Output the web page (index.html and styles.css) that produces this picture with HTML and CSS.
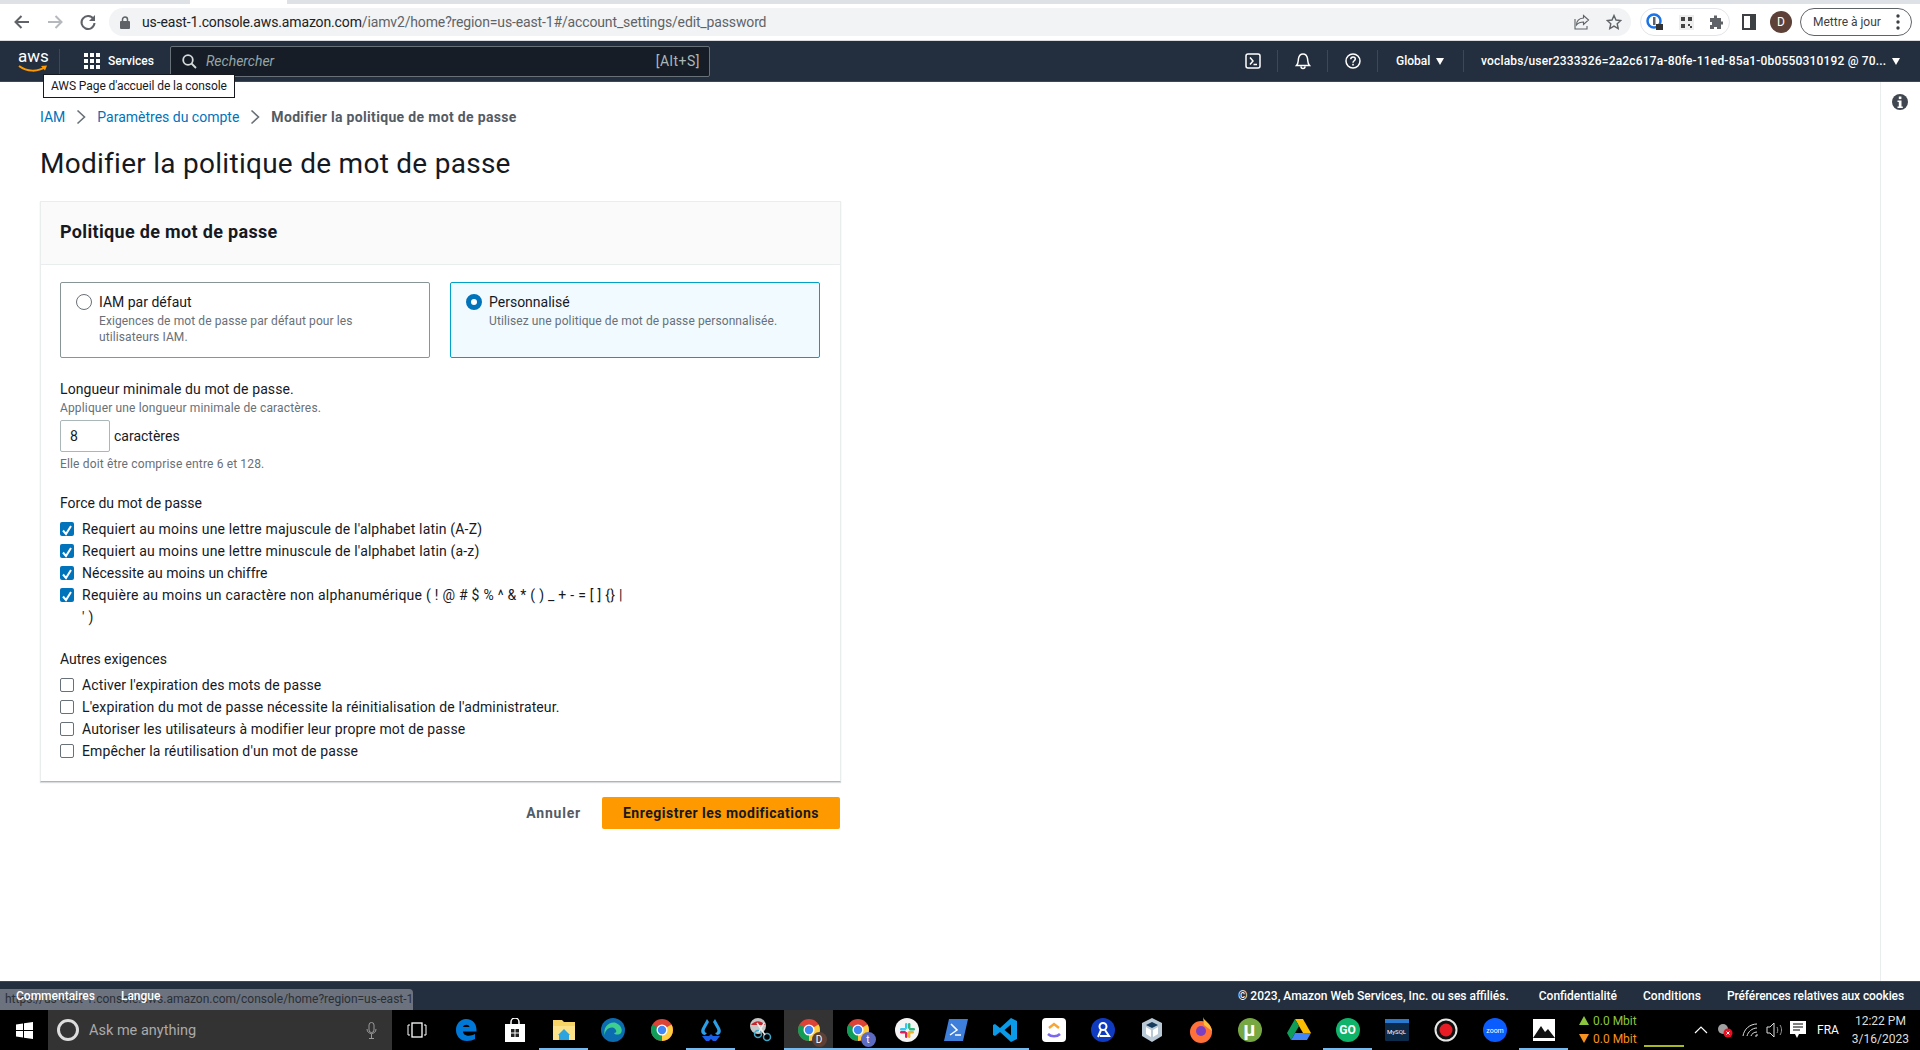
FILE: index.html
```html
<!DOCTYPE html>
<html>

<head>
    <title>Modifier la politique de mot de passe</title>
    <link rel="stylesheet" href="styles.css">
</head>

<body>
    <svg class="defs" width="0" height="0">
        <symbol id="chrome" viewBox="0 0 24 24">
            <circle cx="12" cy="12" r="11" fill="#db4437"/>
            <path d="M12 12 2.5 6.5A11 11 0 0 0 12 23z" fill="#0f9d58"/>
            <path d="M12 12v11a11 11 0 0 0 9.5-16.5z" fill="#ffcd40"/>
            <circle cx="12" cy="12" r="5.5" fill="#fff"/>
            <circle cx="12" cy="12" r="4.2" fill="#4285f4"/>
        </symbol>
        <symbol id="tick" viewBox="0 0 14 16">
            <path d="M3 8.5 6 12l5-8" fill="none" stroke="#fff" stroke-width="2"/>
        </symbol>
    </svg>

    <!-- browser chrome -->
    <div class="tabstrip">
        <div class="tab-active"></div>
    </div>
    <div class="toolbar">
        <div class="nav-buttons">
            <svg width="18" height="18" viewBox="0 0 18 18"><path d="M16 9H3M8.5 3 2.5 9l6 6" fill="none" stroke="#5f6368" stroke-width="2"/></svg>
            <svg width="18" height="18" viewBox="0 0 18 18"><path d="M2 9h13M9.5 3l6 6-6 6" fill="none" stroke="#b5b8bc" stroke-width="2"/></svg>
            <svg width="18" height="18" viewBox="0 0 18 18"><path d="M14.5 6A6.5 6.5 0 1 0 15.5 10" fill="none" stroke="#5f6368" stroke-width="2"/><path d="M16 2v6h-6z" fill="#5f6368"/></svg>
        </div>
        <div class="omnibox">
            <svg width="10" height="13" viewBox="0 0 10 13"><path d="M2.5 5V3.5a2.5 2.5 0 0 1 5 0V5" fill="none" stroke="#5f6368" stroke-width="1.5"/><rect y="5" width="10" height="8" rx="1" fill="#5f6368"/></svg>
            <span class="url"><span class="url-host">us-east-1.console.aws.amazon.com</span>/iamv2/home?region=us-east-1#/account_settings/edit_password</span>
            <svg class="omni-share" width="16" height="16" viewBox="0 0 16 16"><path d="M14.5 6 9.5 1.5V4C4 4.5 2.5 8 2.5 11 4.5 8.5 7 8 9.5 8v2.5zM1 5v10h12v-3" fill="none" stroke="#5f6368" stroke-width="1.1"/></svg>
            <svg width="16" height="16" viewBox="0 0 16 16"><path d="m8 1.5 2 4.5 4.8.5-3.6 3.2 1 4.8L8 12.1 3.8 14.5l1-4.8L1.2 6.5 6 6z" fill="none" stroke="#5f6368" stroke-width="1.4"/></svg>
        </div>
        <div class="ext-pill">
            <svg width="18" height="20" viewBox="0 0 18 20"><circle cx="8" cy="9" r="6.5" fill="none" stroke="#1a73e8" stroke-width="2.5"/><rect x="7" y="5" width="2.5" height="8" fill="#5f6368"/><rect x="10" y="12" width="7" height="6" fill="#333"/></svg>
            <svg width="15" height="15" viewBox="0 0 15 15"><rect width="15" height="15" fill="#eee"/><path d="M2 2h4v4H2zM9 2h4v4H9zM2 9h4v4H2zM9 9h2v2H9zM11 11h2v2h-2z" fill="#444"/></svg>
            <svg width="16" height="16" viewBox="0 0 16 16"><path d="M6 1.5h3V4h4v3.5h2v3h-2V15H9v-2H6v2H2v-4h2V8H2V4h4z" fill="#5f6368"/></svg>
        </div>
        <svg class="side-icon" width="14" height="16" viewBox="0 0 14 16"><path d="M1 1h12v14H1z" fill="#fff" stroke="#3c4043" stroke-width="2"/><rect x="8" y="1" width="5" height="14" fill="#3c4043"/></svg>
        <div class="avatar">D</div>
        <div class="update-pill">
            <span>Mettre à jour</span>
            <svg width="4" height="16" viewBox="0 0 4 16"><circle cx="2" cy="2" r="1.7" fill="#3c4043"/><circle cx="2" cy="8" r="1.7" fill="#3c4043"/><circle cx="2" cy="14" r="1.7" fill="#3c4043"/></svg>
        </div>
    </div>

    <!-- aws console nav -->
    <div class="aws-nav">
        <div class="aws-logo">
            <span class="aws-word">aws</span>
            <svg width="30" height="8" viewBox="0 0 30 8"><path d="M1 1c8 6 19 6 26 1" fill="none" stroke="#f90" stroke-width="2"/><path d="m23 1 6-.5-2 5z" fill="#f90"/></svg>
        </div>
        <div class="services">
            <svg width="16" height="16" viewBox="0 0 16 16" fill="#fff"><path d="M0 0h4v4H0zM6 0h4v4H6zM12 0h4v4h-4zM0 6h4v4H0zM6 6h4v4H6zM12 6h4v4h-4zM0 12h4v4H0zM6 12h4v4H6zM12 12h4v4h-4z"/></svg>
            <span>Services</span>
        </div>
        <div class="search">
            <svg width="15" height="15" viewBox="0 0 15 15"><circle cx="6" cy="6" r="4.8" fill="none" stroke="#d5dbdb" stroke-width="1.8"/><path d="m9.5 9.5 4.5 4.5" stroke="#d5dbdb" stroke-width="1.8"/></svg>
            <span class="search-text">Rechercher</span>
            <span class="search-key">[Alt+S]</span>
        </div>
        <div class="nav-right">
            <div class="nav-icon">
                <svg width="16" height="16" viewBox="0 0 16 16"><rect x="1" y="1" width="14" height="14" rx="2" fill="none" stroke="#fff" stroke-width="1.5"/><path d="m5 4.5 3 3.5-3 3.5M8.5 11.5H12" fill="none" stroke="#fff" stroke-width="1.5"/></svg>
            </div>
            <div class="nav-icon">
                <svg width="16" height="18" viewBox="0 0 16 18"><path d="M1.5 13.5c2-2 1.5-4 2-7C4 3.5 6 2 8 2s4 1.5 4.5 4.5c.5 3 0 5 2 7zM6 14.5a2 2 0 0 0 4 0" fill="none" stroke="#fff" stroke-width="1.5"/></svg>
            </div>
            <div class="nav-icon">
                <svg width="16" height="16" viewBox="0 0 16 16"><circle cx="8" cy="8" r="7" fill="none" stroke="#fff" stroke-width="1.5"/><path d="M5.7 6.2C5.8 4.8 6.8 4 8 4c1.3 0 2.3.9 2.3 2 0 1.8-2.3 1.8-2.3 3.8" fill="none" stroke="#fff" stroke-width="1.5"/><rect x="7.2" y="10.8" width="1.6" height="1.7" fill="#fff"/></svg>
            </div>
            <div class="nav-region">Global <span class="caret"></span></div>
            <div class="nav-user">voclabs/user2333326=2a2c617a-80fe-11ed-85a1-0b0550310192 @ 70... <span class="caret"></span></div>
        </div>
        <div class="nav-tooltip">AWS Page d'accueil de la console</div>
    </div>

    <!-- page -->
    <div class="page">
        <div class="content">
            <div class="breadcrumb">
                <a>IAM</a>
                <svg width="10" height="16" viewBox="0 0 10 16"><path d="m1.5 1.5 7 6.5-7 6.5" fill="none" stroke="#687078" stroke-width="1.6"/></svg>
                <a>Paramètres du compte</a>
                <svg width="10" height="16" viewBox="0 0 10 16"><path d="m1.5 1.5 7 6.5-7 6.5" fill="none" stroke="#687078" stroke-width="1.6"/></svg>
                <strong>Modifier la politique de mot de passe</strong>
            </div>
            <h1>Modifier la politique de mot de passe</h1>

            <div class="panel">
                <div class="panel-header">Politique de mot de passe</div>
                <div class="panel-body">
                    <div class="choice-row">
                        <div class="choice">
                            <span class="radio"></span>
                            <div>
                                <div class="choice-title">IAM par défaut</div>
                                <div class="choice-desc">Exigences de mot de passe par défaut pour les utilisateurs IAM.</div>
                            </div>
                        </div>
                        <div class="choice choice-selected">
                            <span class="radio radio-on"></span>
                            <div>
                                <div class="choice-title">Personnalisé</div>
                                <div class="choice-desc">Utilisez une politique de mot de passe personnalisée.</div>
                            </div>
                        </div>
                    </div>

                    <div class="field-label length-label">Longueur minimale du mot de passe.</div>
                    <div class="hint">Appliquer une longueur minimale de caractères.</div>
                    <div class="length-row">
                        <div class="length-input">8</div>
                        <span>caractères</span>
                    </div>
                    <div class="hint">Elle doit être comprise entre 6 et 128.</div>

                    <div class="field-label group-label">Force du mot de passe</div>
                    <div class="check check-loose"><span class="box box-on"><svg width="14" height="16"><use href="#tick"/></svg></span><span>Requiert au moins une lettre majuscule de l'alphabet latin (A-Z)</span></div>
                    <div class="check check-loose"><span class="box box-on"><svg width="14" height="16"><use href="#tick"/></svg></span><span>Requiert au moins une lettre minuscule de l'alphabet latin (a-z)</span></div>
                    <div class="check check-tight"><span class="box box-on"><svg width="14" height="16"><use href="#tick"/></svg></span><span>Nécessite au moins un chiffre</span></div>
                    <div class="check"><span class="box box-on"><svg width="14" height="16"><use href="#tick"/></svg></span><span class="check-wide">Requière au moins un caractère non alphanumérique ( ! @ # $ % ^ &amp; * ( ) _ + - = [ ] {} | ' )</span></div>

                    <div class="field-label group-label">Autres exigences</div>
                    <div class="check"><span class="box"></span><span>Activer l'expiration des mots de passe</span></div>
                    <div class="check"><span class="box"></span><span>L'expiration du mot de passe nécessite la réinitialisation de l'administrateur.</span></div>
                    <div class="check"><span class="box"></span><span>Autoriser les utilisateurs à modifier leur propre mot de passe</span></div>
                    <div class="check"><span class="box"></span><span>Empêcher la réutilisation d'un mot de passe</span></div>
                </div>
            </div>

            <div class="actions">
                <button class="btn-link">Annuler</button>
                <button class="btn-primary">Enregistrer les modifications</button>
            </div>
        </div>
        <div class="info-rail">
            <svg width="16" height="16" viewBox="0 0 16 16"><circle cx="8" cy="8" r="8" fill="#414750"/><rect x="6.8" y="2.5" width="2.6" height="2.6" fill="#fff"/><path d="M5.5 6.5h4v6h1.3V14H5.5v-1.5h1.3V8H5.500z" fill="#fff"/></svg>
        </div>
    </div>

    <!-- console footer -->
    <div class="aws-footer">
        <div class="status-bubble">https://us-east-1.console.aws.amazon.com/console/home?region=us-east-1</div>
        <div class="footer-left">
            <span>Commentaires</span>
            <span>Langue</span>
        </div>
        <div class="footer-right">
            <span class="footer-copy">© 2023, Amazon Web Services, Inc. ou ses affiliés.</span>
            <span>Confidentialité</span>
            <span>Conditions</span>
            <span class="footer-cookies">Préférences relatives aux cookies</span>
        </div>
    </div>

    <!-- windows taskbar -->
    <div class="taskbar">
        <div class="start">
            <svg width="17" height="17" viewBox="0 0 17 17" fill="#fff"><path d="M0 2.5 7 1.5V8H0zM8 1.3 17 0v8H8zM0 9h7v6.500L0 14.500zM8 9h9v8l-9-1.300z"/></svg>
        </div>
        <div class="cortana">
            <span class="cortana-ring"></span>
            <span class="cortana-text">Ask me anything</span>
            <svg width="11" height="17" viewBox="0 0 11 17"><rect x="3" y=".5" width="5" height="10" rx="2.5" fill="none" stroke="#999"/><path d="M1 7c0 6 9 6 9 0M5.5 12v4M3 16.5h5" fill="none" stroke="#999"/></svg>
        </div>
        <div class="task-item">
            <svg width="20" height="16" viewBox="0 0 20 16"><rect x="5" y="1" width="10" height="14" fill="none" stroke="#fff" stroke-width="1.3"/><path d="M3 3H1v10h2M17 3h2v10h-2" fill="none" stroke="#fff"/></svg>
        </div>
        <div class="task-item">
            <svg width="22" height="24" viewBox="0 0 22 24"><path d="M11 1C5 1 1 6 1 12s4 11 11 11c3 0 6-1 8-2v-5c-5 3-12 2-12-2.500h13.500C22 6 18 1 11 1zM8 9c.5-3 6-3 6.500 0z" fill="#0078d7"/></svg>
        </div>
        <div class="task-item">
            <svg width="22" height="24" viewBox="0 0 22 24"><path d="M7 6V4a4 4 0 0 1 8 0v2" fill="none" stroke="#fff" stroke-width="1.5"/><path d="M1 6h20v18H1z" fill="#fff"/><path d="M7 11h3.5v3.5H7zM11.500 11H15v3.500h-3.500zM7 15.500h3.500V19H7zM11.500 15.500H15V19h-3.500z" fill="#222"/></svg>
        </div>
        <div class="task-item on">
            <svg width="22" height="20" viewBox="0 0 22 20"><path d="M0 0h9l2 2h11v18H0z" fill="#f6d566"/><path d="M0 6h22v14H0z" fill="#fce38a"/><path d="M6 15h10v5H6z" fill="#2ba4e0"/><path d="m11 9 6 6H5z" fill="#2ba4e0"/></svg>
        </div>
        <div class="task-item">
            <svg width="24" height="24" viewBox="0 0 24 24"><circle cx="12" cy="12" r="12" fill="#0c6cb0"/><path d="M4 18C1 9 9 3 15 5c5 2 7 7 5 10-2 2-6 2-7 0 3 0 3-3 0-5-5-2-10 3-9 8z" fill="#3ecf8e"/></svg>
        </div>
        <div class="task-item">
            <svg width="24" height="24"><use href="#chrome"/></svg>
        </div>
        <div class="task-item on">
            <svg width="24" height="26" viewBox="0 0 24 26"><path d="M8 2 3 11c-2 4 0 7 3 7l2-2c-2 0-3-2-2-4l4-7zM16 2l5 9c2 4 0 7-3 7l-2-2c2 0 3-2 2-4l-4-7z" fill="#2b9fe8"/><path d="M3 19h7l2-2 2 2h7l-4 5h-3l-2-2-2 2H7z" fill="#1a5fe8"/></svg>
        </div>
        <div class="task-item">
            <svg width="24" height="26" viewBox="0 0 24 26"><circle cx="10" cy="9" r="8" fill="#c7c7c7"/><path d="M3 8c4-5 10-5 14 0z" fill="#c1272d"/><circle cx="10" cy="17" r="3.5" fill="none" stroke="#3fa9c9" stroke-width="1.5"/><circle cx="19" cy="20" r="3.5" fill="none" stroke="#3fa9c9" stroke-width="1.5"/><path d="m9 6 8 12M16 6l-5 9" stroke="#eee" stroke-width="1.5"/></svg>
        </div>
        <div class="task-item on active">
            <span class="badged">
                <svg width="24" height="24"><use href="#chrome"/></svg>
                <span class="badge badge-d">D</span>
            </span>
        </div>
        <div class="task-item on">
            <span class="badged">
                <svg width="24" height="24"><use href="#chrome"/></svg>
                <span class="badge badge-t">t</span>
            </span>
        </div>
        <div class="task-item on">
            <svg width="24" height="24" viewBox="0 0 24 24"><circle cx="12" cy="12" r="12" fill="#f4f4f4"/><rect x="5" y="10" width="6" height="2.4" rx="1.2" fill="#36c5f0"/><rect x="10" y="5" width="2.4" height="6" rx="1.2" fill="#36c5f0"/><rect x="13" y="5" width="2.4" height="6" rx="1.2" fill="#2eb67d"/><rect x="14" y="10" width="6" height="2.4" rx="1.2" fill="#2eb67d"/><rect x="13" y="13" width="6" height="2.4" rx="1.2" fill="#ecb22e"/><rect x="13" y="14" width="2.4" height="6" rx="1.2" fill="#ecb22e"/><rect x="10" y="14" width="2.4" height="6" rx="1.2" fill="#e01e5a"/><rect x="5" y="13" width="6" height="2.4" rx="1.2" fill="#e01e5a"/></svg>
        </div>
        <div class="task-item on">
            <svg width="24" height="22" viewBox="0 0 24 22"><path d="M5 0h19l-5 22H0z" fill="#3f7fdc"/><path d="m7 5 6 6-7 5" fill="none" stroke="#fff" stroke-width="1.5"/><path d="M11 16h6" stroke="#fff" stroke-width="1.5"/></svg>
        </div>
        <div class="task-item on">
            <svg width="24" height="24" viewBox="0 0 24 24"><path d="m18 0 6 3v18l-6 3-11-10-5 4-2-1V7l2-1 5 4zm0 6.5L11.5 12l6.5 5.5z" fill="#0a9ae8"/></svg>
        </div>
        <div class="task-item">
            <svg width="24" height="24" viewBox="0 0 24 24"><rect width="24" height="24" rx="4" fill="#fff"/><path d="m7 10 5-4 5 4" fill="none" stroke="#f7a534" stroke-width="2.5"/><path d="M6 16c3 3 9 3 12 0" fill="none" stroke="#7b68ee" stroke-width="2.5"/></svg>
        </div>
        <div class="task-item">
            <svg width="24" height="24" viewBox="0 0 24 24"><circle cx="12" cy="12" r="12" fill="#0f3bc0"/><circle cx="12" cy="8.5" r="3.5" fill="none" stroke="#fff" stroke-width="2"/><path d="m10 12-3 7M14 12l4 6H9" fill="none" stroke="#fff" stroke-width="2"/></svg>
        </div>
        <div class="task-item">
            <svg width="24" height="26" viewBox="0 0 24 26"><path d="m12 1 10 5v13l-10 6-10-6V6z" fill="#b9c9d6"/><path d="m12 5 6 3-6 3-6-3z" fill="#163b5c"/><path d="M6 10l5 3v7l-5-3zM18 10l-5 3v7l5-3z" fill="#fff"/></svg>
        </div>
        <div class="task-item">
            <svg width="24" height="26" viewBox="0 0 24 26"><circle cx="12" cy="15" r="11" fill="#ff7139"/><path d="M14 0c1 4 8 6 9 14L15 8z" fill="#ffbd3f"/><circle cx="12" cy="14" r="5" fill="#7b3fc4"/></svg>
        </div>
        <div class="task-item">
            <span class="round-app app-torrent">µ</span>
        </div>
        <div class="task-item">
            <svg width="24" height="22" viewBox="0 0 24 22"><path d="M8 0h8l8 14h-8z" fill="#fbbc04"/><path d="M8 0 0 14l4 7L12 7z" fill="#0f9d58"/><path d="M8 14h16l-4 7H4z" fill="#4285f4"/></svg>
        </div>
        <div class="task-item on">
            <span class="round-app app-go">GO</span>
        </div>
        <div class="task-item">
            <svg width="24" height="22" viewBox="0 0 24 22"><rect width="24" height="22" rx="1" fill="#0c2a4a"/><rect width="24" height="4" fill="#2a7bd0"/><text x="2" y="15" class="mysql-text">MySQL</text></svg>
        </div>
        <div class="task-item">
            <svg width="24" height="24" viewBox="0 0 24 24"><circle cx="12" cy="12" r="10.5" fill="#111" stroke="#e6e6e6" stroke-width="2"/><circle cx="12" cy="12" r="6.5" fill="#e81c24"/></svg>
        </div>
        <div class="task-item">
            <svg width="24" height="24" viewBox="0 0 24 24"><circle cx="12" cy="12" r="12" fill="#0b5cff"/><text x="12" y="14.5" class="zoom-text">zoom</text></svg>
        </div>
        <div class="task-item on">
            <svg width="22" height="22" viewBox="0 0 22 22"><rect width="22" height="22" fill="#fff"/><path d="M0 19 8 7l4 6 3-3 7 9z" fill="#111"/><path d="M0 0h22v2H0z" fill="#fff"/></svg>
        </div>
        <div class="netmeter">
            <div class="net-up"><span class="tri-up"></span>0.0 Mbit</div>
            <div class="net-down"><span class="tri-down"></span>0.0 Mbit</div>
        </div>
        <div class="tray">
            <span class="tray-line"></span>
            <svg width="14" height="8" viewBox="0 0 14 8"><path d="m1 7 6-6 6 6" fill="none" stroke="#fff" stroke-width="1.2"/></svg>
            <svg width="18" height="16" viewBox="0 0 18 16"><circle cx="7" cy="7" r="5" fill="#a0a0a0"/><circle cx="12" cy="11" r="4.5" fill="#e81123"/><path d="m10.5 9.5 3 3M13.5 9.5l-3 3" stroke="#fff"/></svg>
            <svg width="16" height="14" viewBox="0 0 16 14"><path d="M1 13C2 6 8 1 15 1M5 13c1-4 5-8 10-8M9 13c.5-2 3-4 6-4M13 13h2v-2" fill="none" stroke="#ddd"/></svg>
            <svg width="18" height="16" viewBox="0 0 18 16"><path d="M1 5h3l4-4v14l-4-4H1z" fill="none" stroke="#ddd"/><path d="M11 5c1 2 1 4 0 6M14 3c2 3 2 7 0 10" fill="none" stroke="#999"/></svg>
            <svg class="tray-note" width="16" height="18" viewBox="0 0 16 18"><path d="M0 0h16v13H9l-2 4-2-4H0z" fill="#fff"/><path d="M3 3h10M3 6h10M3 9h7" stroke="#000"/></svg>
            <span class="tray-lang">FRA</span>
            <div class="clock">
                <div>12:22 PM</div>
                <div>3/16/2023</div>
            </div>
        </div>
    </div>
</body>

</html>
```

FILE: styles.css
```css
html,
body {
    margin: 0;
    padding: 0;
}

body {
    width: 1920px;
    height: 1050px;
    display: flex;
    flex-direction: column;
    overflow: hidden;
    font-family: Roboto, "Liberation Sans", sans-serif;
    font-size: 14px;
    color: #16191f;
    background-color: #fff;
}

svg {
    display: block;
    flex-shrink: 0;
}

.defs {
    position: absolute;
}

/* browser chrome */

.tabstrip {
    height: 4px;
    background-color: #dee1e6;
    padding-left: 190px;
}

.tab-active {
    width: 97px;
    height: 4px;
    background-color: #fff;
}

.toolbar {
    height: 36px;
    display: flex;
    align-items: center;
    background-color: #fff;
    border-bottom: 1px solid #dadce0;
}

.nav-buttons {
    width: 109px;
    display: flex;
    gap: 15px;
    padding-left: 13px;
    box-sizing: border-box;
}

.omnibox {
    width: 1522px;
    height: 28px;
    display: flex;
    align-items: center;
    gap: 12px;
    padding: 0 9px 0 11px;
    box-sizing: border-box;
    background-color: #f1f3f4;
    border-radius: 14px;
}

.url {
    flex: 1;
    font-size: 14px;
    letter-spacing: -0.14px;
    color: #5f6368;
}

.url-host {
    color: #202124;
}

.omni-share {
    margin-right: 4px;
}

.ext-pill {
    width: 90px;
    height: 28px;
    margin-left: 9px;
    display: flex;
    align-items: center;
    justify-content: space-between;
    padding: 0 5px;
    box-sizing: border-box;
    border: 1px solid #e3e5e8;
    border-radius: 14px;
}

.side-icon {
    margin-left: 12px;
}

.avatar {
    width: 22px;
    height: 22px;
    margin-left: 14px;
    border-radius: 50%;
    background-color: #5d4037;
    color: #fff;
    font-size: 12px;
    line-height: 22px;
    text-align: center;
}

.update-pill {
    width: 112px;
    height: 28px;
    margin-left: 8px;
    display: flex;
    align-items: center;
    gap: 15px;
    padding-left: 12px;
    box-sizing: border-box;
    border: 1px solid #5f6368;
    border-radius: 14px;
    font-size: 12px;
    color: #3c4043;
}

/* aws nav */

.aws-nav {
    position: relative;
    height: 41px;
    display: flex;
    align-items: center;
    background-color: #232f3e;
    border-bottom: 1px solid #414750;
    box-sizing: border-box;
    color: #fff;
}

.aws-logo {
    width: 60px;
    height: 25px;
    margin-right: 24px;
    padding-left: 18px;
    box-sizing: border-box;
    border-right: 1px solid #414750;
}

.aws-word {
    display: block;
    height: 16px;
    font-size: 17px;
    line-height: 15px;
}

.services {
    width: 86px;
    display: flex;
    align-items: center;
    gap: 8px;
    font-size: 12px;
    font-weight: 500;
}

.search {
    width: 540px;
    height: 31px;
    display: flex;
    align-items: center;
    gap: 9px;
    padding: 0 9px 0 11px;
    box-sizing: border-box;
    background-color: #161d26;
    border: 1px solid #687078;
    border-radius: 2px;
}

.search-text {
    flex: 1;
    font-style: italic;
    font-size: 14px;
    color: #95a5a6;
}

.search-key {
    color: #aab7b8;
    font-size: 14px;
    letter-spacing: 0.5px;
}

.nav-right {
    flex: 1;
    display: flex;
    align-items: center;
    justify-content: flex-end;
    font-size: 12px;
    font-weight: 500;
}

.nav-icon {
    width: 50px;
    height: 22px;
    display: flex;
    align-items: center;
    justify-content: center;
    border-right: 1px solid #414750;
    box-sizing: border-box;
}

.nav-region {
    width: 86px;
    height: 22px;
    line-height: 22px;
    padding-left: 18px;
    box-sizing: border-box;
    border-right: 1px solid #414750;
    white-space: nowrap;
}

.nav-user {
    width: 456px;
    padding-left: 17px;
    box-sizing: border-box;
    letter-spacing: 0.18px;
    white-space: nowrap;
}

.caret {
    display: inline-block;
    margin-left: 3px;
    border-left: 4.5px solid transparent;
    border-right: 4.5px solid transparent;
    border-top: 7px solid #fff;
}

.nav-tooltip {
    position: absolute;
    left: 43px;
    top: 33px;
    width: 192px;
    height: 24px;
    box-sizing: border-box;
    background-color: #fff;
    border: 1px solid #16191f;
    color: #16191f;
    font-size: 12px;
    letter-spacing: -0.08px;
    line-height: 22px;
    padding-left: 7px;
    white-space: nowrap;
    z-index: 2;
}

/* page */

.page {
    flex: 1;
    display: flex;
    min-height: 0;
}

.content {
    width: 1880px;
    padding-left: 40px;
    box-sizing: border-box;
}

.breadcrumb {
    height: 20px;
    margin-top: 25px;
    display: flex;
    align-items: center;
    gap: 11px;
}

.breadcrumb a {
    color: #0073bb;
}

.breadcrumb strong {
    color: #545b64;
    font-weight: 700;
    letter-spacing: 0.33px;
}

h1 {
    margin: 16px 0 0;
    height: 42px;
    font-size: 28px;
    letter-spacing: 0.27px;
    line-height: 42px;
    font-weight: 400;
    color: #16191f;
}

.panel {
    width: 801px;
    margin-top: 16px;
    box-sizing: border-box;
    border: 1px solid #eaeded;
    border-bottom-color: #aab7b8;
    background-color: #fff;
    box-shadow: 0 1px 1px rgba(0, 28, 36, 0.15);
}

.panel-header {
    height: 63px;
    padding-left: 19px;
    box-sizing: border-box;
    background-color: #fafafa;
    border-bottom: 1px solid #eaeded;
    font-size: 18px;
    font-weight: 700;
    letter-spacing: 0.33px;
    line-height: 60px;
}

.panel-body {
    padding: 17px 20px 19px 19px;
}

.choice-row {
    display: flex;
    gap: 20px;
}

.choice {
    width: 370px;
    height: 76px;
    display: flex;
    gap: 7px;
    padding: 9px 30px 9px 15px;
    box-sizing: border-box;
    border: 1px solid #879596;
    border-radius: 2px;
}

.choice-selected {
    background-color: #f1faff;
    border-color: #00a1c9;
}

.radio {
    width: 14px;
    height: 14px;
    margin-top: 2px;
    border: 1px solid #687078;
    border-radius: 50%;
    flex-shrink: 0;
    background-color: #fff;
}

.radio-on {
    width: 6px;
    height: 6px;
    border: 5px solid #0073bb;
}

.choice-title {
    line-height: 20px;
}

.choice-desc {
    font-size: 12px;
    letter-spacing: 0.1px;
    line-height: 16px;
    padding-top: 1px;
    color: #687078;
}

.field-label {
    line-height: 20px;
}

.length-label {
    margin-top: 21px;
    letter-spacing: 0.1px;
}

.hint {
    font-size: 12px;
    letter-spacing: 0.15px;
    line-height: 16px;
    margin-top: 1px;
    color: #687078;
}

.length-row {
    display: flex;
    align-items: center;
    gap: 4px;
    margin-top: 4px;
}

.length-row + .hint {
    margin-top: 4px;
}

.length-input {
    width: 50px;
    height: 32px;
    padding-left: 9px;
    box-sizing: border-box;
    border: 1px solid #aab7b8;
    border-radius: 2px;
    line-height: 30px;
}

.group-label {
    margin-top: 21px;
}

.check {
    display: flex;
    gap: 8px;
    line-height: 22px;
    letter-spacing: 0.12px;
}

.check-loose {
    letter-spacing: 0.175px;
}

.check-tight {
    letter-spacing: 0;
}

.group-label + .check {
    margin-top: 5px;
}

.check-wide {
    width: 545px;
    letter-spacing: 0.265px;
}

.box {
    width: 14px;
    height: 14px;
    margin-top: 4px;
    box-sizing: border-box;
    border: 1px solid #687078;
    border-radius: 2px;
    flex-shrink: 0;
}

.box-on {
    border: 0;
    background-color: #0073bb;
}

.actions {
    width: 800px;
    margin-top: 15px;
    display: flex;
    justify-content: flex-end;
    align-items: center;
    gap: 21px;
}

.btn-link {
    border: 0;
    background: none;
    padding: 0;
    font-family: inherit;
    font-size: 14px;
    font-weight: 700;
    letter-spacing: 0.8px;
    color: #545b64;
}

.btn-primary {
    width: 238px;
    height: 32px;
    border: 0;
    border-radius: 2px;
    background-color: #ff9900;
    font-family: inherit;
    font-size: 14px;
    font-weight: 700;
    letter-spacing: 0.5px;
    color: #16191f;
}

.info-rail {
    width: 40px;
    border-left: 1px solid #eaeded;
    padding: 12px 0 0 11px;
    box-sizing: border-box;
}

/* console footer */

.aws-footer {
    position: relative;
    height: 29px;
    display: flex;
    justify-content: space-between;
    align-items: center;
    padding: 0 16px;
    box-sizing: border-box;
    background-color: #232f3e;
    border-top: 1px solid #414750;
    color: #fff;
    font-size: 12px;
    font-weight: 500;
}

.footer-left,
.footer-right {
    position: relative;
    display: flex;
    gap: 26px;
}

.footer-copy {
    margin-right: 4px;
}

.footer-cookies {
    letter-spacing: -0.1px;
}

.status-bubble {
    position: absolute;
    left: 0;
    top: 7px;
    width: 413px;
    height: 21px;
    padding-left: 5px;
    box-sizing: border-box;
    background-color: #6c737e;
    border-top-right-radius: 4px;
    color: #2b2f36;
    font-size: 12px;
    font-weight: 400;
    line-height: 21px;
    white-space: nowrap;
}

/* windows taskbar */

.taskbar {
    height: 40px;
    display: flex;
    align-items: center;
    background-color: #000;
    color: #fff;
}

.start {
    width: 48px;
    display: flex;
    justify-content: center;
}

.cortana {
    width: 344px;
    height: 40px;
    display: flex;
    align-items: center;
    padding: 0 15px 0 9px;
    box-sizing: border-box;
    background-color: #333;
    color: #aaa;
    font-size: 14.5px;
}

.cortana-ring {
    width: 16px;
    height: 16px;
    border: 3px solid #ddd;
    border-radius: 50%;
    margin-right: 10px;
}

.cortana-text {
    flex: 1;
}

.task-item {
    width: 49px;
    height: 40px;
    display: flex;
    align-items: center;
    justify-content: center;
    box-sizing: border-box;
}

.task-item.on {
    box-shadow: inset 0 -2px 0 #76b9ed;
}

.task-item.active {
    background-color: #333;
}

.badged {
    position: relative;
}

.badge {
    position: absolute;
    right: -6px;
    bottom: -5px;
    width: 15px;
    height: 15px;
    border-radius: 50%;
    color: #fff;
    font-size: 10px;
    line-height: 15px;
    text-align: center;
}

.badge-d {
    background-color: #5d4037;
}

.badge-t {
    background-color: #5c6bc0;
}

.round-app {
    width: 24px;
    height: 24px;
    border-radius: 50%;
    color: #fff;
    font-weight: 700;
    text-align: center;
}

.app-torrent {
    background-color: #76a743;
    font-size: 20px;
    line-height: 22px;
}

.app-go {
    background-color: #0fb36a;
    font-size: 12px;
    line-height: 24px;
}

.mysql-text {
    font-size: 6px;
    fill: #fff;
}

.zoom-text {
    font-size: 7px;
    fill: #fff;
    text-anchor: middle;
}

.netmeter {
    width: 69px;
    padding-left: 11px;
    box-sizing: border-box;
    font-size: 12px;
    line-height: 18px;
}

.net-up {
    color: #8cc63f;
}

.net-down {
    color: #f7931e;
}

.tri-up,
.tri-down {
    display: inline-block;
    margin-right: 4px;
    border-left: 5px solid transparent;
    border-right: 5px solid transparent;
}

.tri-up {
    border-bottom: 9px solid #8cc63f;
}

.tri-down {
    border-top: 9px solid #f7931e;
}

.tray {
    position: relative;
    flex: 1;
    display: flex;
    align-items: center;
    gap: 8px;
    padding-left: 57px;
    box-sizing: border-box;
}

.tray-line {
    position: absolute;
    left: 7px;
    bottom: 1px;
    width: 40px;
    height: 2px;
    background-color: #a8b820;
}

.tray-note {
    margin-left: -2px;
}

.tray-lang {
    margin-left: 3px;
    font-size: 12px;
}

.clock {
    margin-left: 5px;
    font-size: 12px;
    line-height: 18px;
    text-align: center;
    color: #ddd;
}
```
